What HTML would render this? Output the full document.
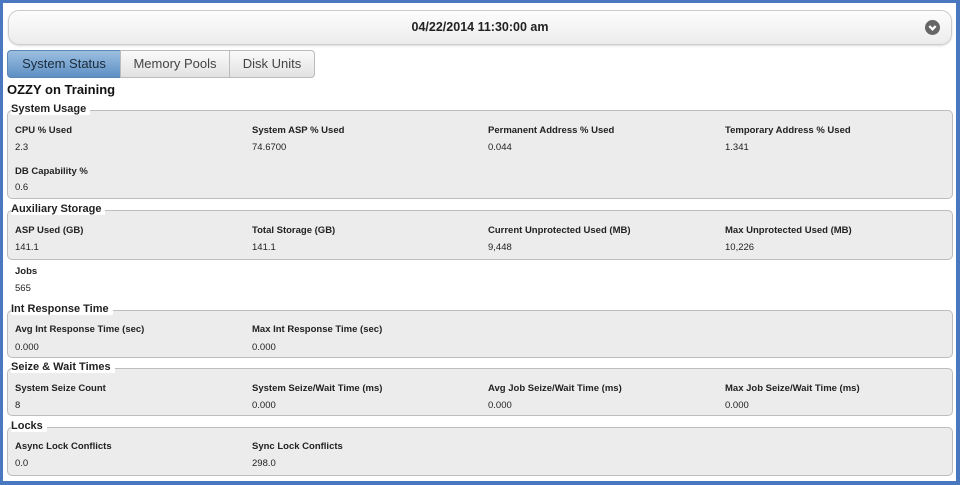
<!DOCTYPE html>
<html><head><meta charset="utf-8"><style>
*{margin:0;padding:0;box-sizing:border-box}
body{width:960px;height:485px;background:#fff;font-family:"Liberation Sans",Arial,sans-serif;position:relative;overflow:hidden;color:#222}
.frame{position:absolute;left:0;top:0;width:960px;height:485px;border:3px solid #4a78c0;border-right-width:4px;border-bottom-width:4px}
.hdr{position:absolute;left:8px;top:10px;width:944px;height:35px;border:1px solid #ccc;border-radius:11px;background:linear-gradient(#fdfdfd,#ececec);box-shadow:0 1px 2px rgba(0,0,0,.15);text-align:center;font-weight:bold;font-size:12.5px;line-height:33px;color:#222}
.dd{position:absolute;right:11px;top:9px;width:15px;height:15px}
.dd svg{display:block}
.tab{position:absolute;top:50px;height:28px;border:1px solid #bbb;background:linear-gradient(#fafafa,#e2e2e2);font-size:13px;line-height:26px;text-align:center;color:#444}
.tab.a{background:linear-gradient(#9cbfe0,#5d8fc4);color:#1a2a3a;border-color:#5a86b6;border-radius:4px 0 0 4px}
.title{position:absolute;left:7px;top:82px;font-weight:bold;font-size:13px;color:#111}
.box{position:absolute;left:7px;width:946px;border:1px solid #bdbdbd;border-radius:5px;background:#ececec}
.lg{position:absolute;left:11px;font-weight:bold;font-size:11px;background:#fff;padding-right:4px;color:#222;line-height:12px}
.l{position:absolute;font-weight:bold;font-size:9.5px;color:#222}
.v{position:absolute;font-size:9.5px;color:#222}
</style></head><body>
<div class="hdr">04/22/2014 11:30:00 am
<div class="dd"><svg width="15" height="15" viewBox="0 0 15 15"><circle cx="7.5" cy="7.5" r="7.5" fill="#666"/><path d="M4.3 6 L7.5 9.3 L10.7 6" stroke="#fff" stroke-width="2.3" fill="none"/></svg></div></div>
<div class="tab a" style="left:7px;width:114px">System Status</div>
<div class="tab" style="left:120px;width:110px">Memory Pools</div>
<div class="tab" style="left:229px;width:86px;border-radius:0 4px 4px 0">Disk Units</div>
<div class="title">OZZY on Training</div>

<div class="box" style="top:110px;height:89px"></div>
<div class="box" style="top:210px;height:50px"></div>
<div class="box" style="top:310px;height:48px"></div>
<div class="box" style="top:368px;height:48px"></div>
<div class="box" style="top:427px;height:49px"></div>
<div class="lg" style="top:103px;left:11px">System Usage</div>
<div class="lg" style="top:203px">Auxiliary Storage</div>
<div class="lg" style="top:303px">Int Response Time</div>
<div class="lg" style="top:361px">Seize &amp; Wait Times</div>
<div class="lg" style="top:420px">Locks</div>

<div class="l" style="left:15px;top:125px">CPU % Used</div><div class="v" style="left:15px;top:142px">2.3</div>
<div class="l" style="left:252px;top:125px">System ASP % Used</div><div class="v" style="left:252px;top:142px">74.6700</div>
<div class="l" style="left:488px;top:125px">Permanent Address % Used</div><div class="v" style="left:488px;top:142px">0.044</div>
<div class="l" style="left:725px;top:125px">Temporary Address % Used</div><div class="v" style="left:725px;top:142px">1.341</div>
<div class="l" style="left:15px;top:166px">DB Capability %</div><div class="v" style="left:15px;top:182px">0.6</div>

<div class="l" style="left:15px;top:225px">ASP Used (GB)</div><div class="v" style="left:15px;top:242px">141.1</div>
<div class="l" style="left:252px;top:225px">Total Storage (GB)</div><div class="v" style="left:252px;top:242px">141.1</div>
<div class="l" style="left:488px;top:225px">Current Unprotected Used (MB)</div><div class="v" style="left:488px;top:242px">9,448</div>
<div class="l" style="left:725px;top:225px">Max Unprotected Used (MB)</div><div class="v" style="left:725px;top:242px">10,226</div>

<div class="l" style="left:15px;top:266px">Jobs</div><div class="v" style="left:15px;top:283px">565</div>

<div class="l" style="left:15px;top:324px">Avg Int Response Time (sec)</div><div class="v" style="left:15px;top:342px">0.000</div>
<div class="l" style="left:252px;top:324px">Max Int Response Time (sec)</div><div class="v" style="left:252px;top:342px">0.000</div>

<div class="l" style="left:15px;top:383px">System Seize Count</div><div class="v" style="left:15px;top:400px">8</div>
<div class="l" style="left:252px;top:383px">System Seize/Wait Time (ms)</div><div class="v" style="left:252px;top:400px">0.000</div>
<div class="l" style="left:488px;top:383px">Avg Job Seize/Wait Time (ms)</div><div class="v" style="left:488px;top:400px">0.000</div>
<div class="l" style="left:725px;top:383px">Max Job Seize/Wait Time (ms)</div><div class="v" style="left:725px;top:400px">0.000</div>

<div class="l" style="left:15px;top:441px">Async Lock Conflicts</div><div class="v" style="left:15px;top:458px">0.0</div>
<div class="l" style="left:252px;top:441px">Sync Lock Conflicts</div><div class="v" style="left:252px;top:458px">298.0</div>
<div class="frame"></div>
</body></html>
